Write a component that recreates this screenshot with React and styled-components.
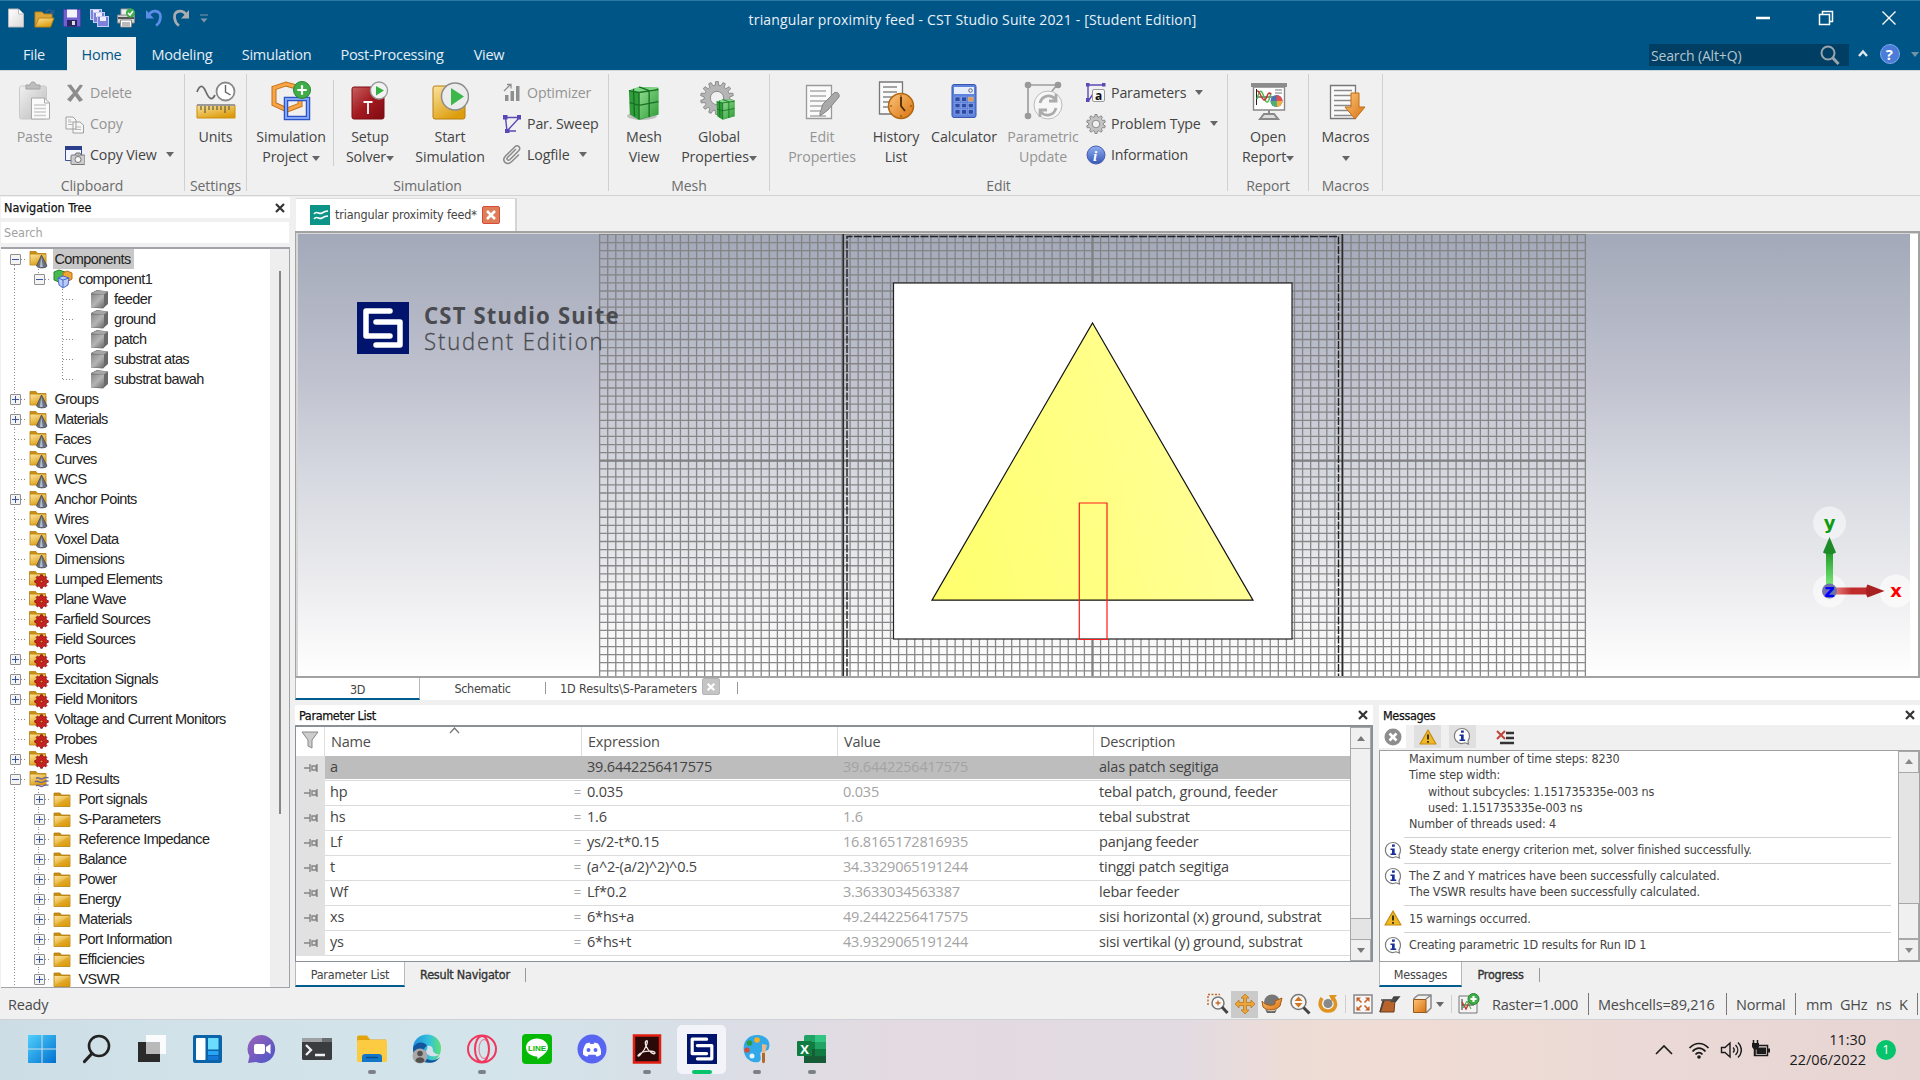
import React from 'react';
import styled, { createGlobalStyle, css } from 'styled-components';

const UI = `"Open Sans", "Noto Sans", sans-serif`;
const DLG = `"DejaVu Sans Condensed", "DejaVu Sans", sans-serif`;
const TREE = `"Liberation Sans", Arial, sans-serif`;

const Global = createGlobalStyle`
  * { box-sizing: border-box; }
  body { margin: 0; background: #f0f0f0; overflow: hidden; }
  svg { display: block; flex: none; }
`;

const Screen = styled.div`
  width: 1920px;
  height: 1080px;
  display: flex;
  flex-direction: column;
  overflow: hidden;
  background: #f0f0f0;
  font-family: ${UI};
  color: #444;
`;

/* ---------- icons ---------- */
const Svg = ({ w = 20, h, vb, children }) => (
  <svg width={w} height={h || w} viewBox={vb || `0 0 ${w} ${h || w}`} fill="none">{children}</svg>
);

const DefsSvg = styled.svg`
  position: absolute;
`;

const Defs = () => (
  <DefsSvg width="0" height="0">
    <defs>
      <linearGradient id="gold" x1="0" y1="0" x2="0.6" y2="1"><stop stopColor="#fbe3a0" /><stop offset="1" stopColor="#dd9d0c" /></linearGradient>
      <linearGradient id="grey" x1="0" y1="0" x2="1" y2="1"><stop stopColor="#f2f2f2" /><stop offset="1" stopColor="#8f8f8f" /></linearGradient>
      <linearGradient id="cube" x1="0" y1="0" x2="1" y2="1"><stop stopColor="#8a8a8a" /><stop offset=".5" stopColor="#b4b4b4" /><stop offset="1" stopColor="#6a6a6a" /></linearGradient>
      <linearGradient id="red" x1="0" y1="0" x2="1" y2="1"><stop stopColor="#c86060" /><stop offset=".5" stopColor="#a31a20" /><stop offset="1" stopColor="#7d0b10" /></linearGradient>
      <linearGradient id="blue" x1="0" y1="0" x2="0" y2="1"><stop stopColor="#8fb0f0" /><stop offset="1" stopColor="#3456b8" /></linearGradient>
      <linearGradient id="orange" x1="0" y1="0" x2="1" y2="1"><stop stopColor="#fbc47a" /><stop offset="1" stopColor="#d9720f" /></linearGradient>
      <linearGradient id="green" x1="0" y1="0" x2="1" y2="1"><stop stopColor="#8fdc8f" /><stop offset="1" stopColor="#2f9c36" /></linearGradient>
      <linearGradient id="paper" x1="0" y1="0" x2="1" y2="1"><stop stopColor="#ffffff" /><stop offset="1" stopColor="#dadada" /></linearGradient>
      <linearGradient id="win" x1="0" y1="0" x2="1" y2="1"><stop stopColor="#4fd0fb" /><stop offset="1" stopColor="#0070d0" /></linearGradient>
      <linearGradient id="chat" x1="0" y1="0" x2="1" y2="1"><stop stopColor="#9d62b8" /><stop offset="1" stopColor="#4a56c8" /></linearGradient>
      <linearGradient id="edge" x1="0" y1="0" x2="1" y2="0"><stop stopColor="#1f8fe0" /><stop offset=".6" stopColor="#35c4d8" /><stop offset="1" stopColor="#5fe070" /></linearGradient>
    </defs>
  </DefsSvg>
);

const Gear = ({ cx, cy, r, n = 10, fill, stroke, hole = '#f0f0f0', hr = 0.4 }) => {
  const pts = [];
  for (let i = 0; i < n; i++) {
    [[-0.3, 0.78], [-0.18, 1], [0.18, 1], [0.3, 0.78]].forEach(([o, k]) => {
      const a = ((i + o) / n) * Math.PI * 2 - Math.PI / 2;
      pts.push(`${(cx + Math.cos(a) * r * k).toFixed(2)},${(cy + Math.sin(a) * r * k).toFixed(2)}`);
    });
  }
  return (
    <g>
      <polygon points={pts.join(' ')} fill={fill} stroke={stroke} strokeWidth=".8" />
      <circle cx={cx} cy={cy} r={r * hr} fill={hole} stroke={stroke} strokeWidth=".8" />
    </g>
  );
};

const GreenCube = ({ x = 0, y = 0, s = 1 }) => (
  <g transform={`translate(${x} ${y}) scale(${s})`}>
    <path d="M1 5 L12 1 L33 2 L33 31 L12 37 L2 31 Z" fill="#2f9e3a" />
    <path d="M1 5 L12 1 L33 2 L24 7 L12 7 Z" fill="#7fd684" />
    <path d="M12 7 L33 4 L33 31 L12 36 Z" fill="url(#green)" />
    <path d="M12 7 L12 36 M1 5 L12 7 L33 4 M2 18 L12 21 L33 17 M23 5 L23 34 M6 3 L7 33 M12 1 L23 5" stroke="#186f24" strokeWidth="1.5" />
  </g>
);

const PlusBadge = ({ cx, cy, r }) => (
  <g>
    <circle cx={cx} cy={cy} r={r} fill="#3fae49" stroke="#2a8433" />
    <path d={`M${cx - r * 0.55} ${cy}h${r * 1.1}M${cx} ${cy - r * 0.55}v${r * 1.1}`} stroke="#fff" strokeWidth="2.2" />
  </g>
);

const Lines = ({ x, y, w, n, gap, c = '#8a8a8a' }) => (
  <path d={Array.from({ length: n }, (_, i) => `M${x} ${y + i * gap}h${w}`).join('')} stroke={c} strokeWidth="1.3" />
);

const I = {
  newDoc: <Svg w={20}><path d="M2.500 1h10l5 5v13h-15z" fill="url(#paper)" stroke="#b8b8b8" /><path d="M12.500 1v5h5" fill="#fff" stroke="#bbb" /></Svg>,
  open: <Svg w={22} h={20}><path d="M2 19V4h7l2 2h8v4" fill="#dba63a" stroke="#b98212" /><path d="M2 19l4-9h15l-3.500 9z" fill="url(#gold)" stroke="#b98212" /><path d="M13 4c3-3.500 6-2 7 1m1-3l-.8 3.300-3-.8" stroke="#2f6190" strokeWidth="1.300" /></Svg>,
  save: <Svg w={20}><path d="M1.500 1.500h17v17h-16l-1-1z" fill="#6f62d0" stroke="#4a3fa8" /><path d="M5 1.500h10v8h-10z" fill="#f3f3fb" /><path d="M5 12h10v6.500h-10z" fill="#2a2560" /><path d="M10 13h3v4h-3z" fill="#ddd" /></Svg>,
  saveAll: <Svg w={20}>{[[1, 1], [4, 4], [8, 8]].map(([x, y]) => <g key={x}><rect x={x + 0.5} y={y + 0.5} width="11" height="10" fill="#7d82d8" stroke="#c5cbf5" /><rect x={x + 3} y={y + 1} width="6" height="4" fill="#eef" /></g>)}</Svg>,
  print: <Svg w={20}><path d="M5 1h10v7h-10z" fill="#eee" stroke="#999" /><path d="M1.500 7h17v8h-17z" fill="#d5d5d5" stroke="#888" /><path d="M2 10h16" stroke="#555" strokeWidth="2" /><path d="M4.500 12h11v7h-11z" fill="#fff" stroke="#888" /><path d="M6 15h8M6 17h8" stroke="#777" /><circle cx="14.500" cy="5" r="4.600" fill="#3fae49" /><path d="M12 5l2 2 3-4" stroke="#fff" strokeWidth="1.500" /></Svg>,
  undo: <Svg w={20} vb="-2 0 20 20"><path d="M3 8C7 1 16 2 15.500 9c-.3 4-2 7-4.500 8.500" stroke="#5a8ce8" strokeWidth="2.800" /><path d="M1 2v8.500h8z" fill="#5a8ce8" /></Svg>,
  redo: <Svg w={20} vb="-2 0 20 20"><path d="M15 8C11 1 2 2 2.500 9c.3 4 2 7 4.500 8.500" stroke="#a9adb0" strokeWidth="2.800" /><path d="M17 2v8.500h-8z" fill="#a9adb0" /></Svg>,
  paste: <Svg w={34} h={40}><rect x="1.500" y="5" width="27" height="33" rx="2" fill="url(#grey)" opacity=".55" stroke="#aaa" /><path d="M8 8h14v-4h-4c0-4-6-4-6 0h-4z" fill="#bdbdbd" stroke="#a2a2a2" /><path d="M13.500 17h13l5 5v16h-18z" fill="#fbfbfb" stroke="#a8a8a8" /><path d="M26.500 17v5h5" stroke="#a8a8a8" /><Lines x={16} y={24} w={12} n={4} gap={3.5} c="#ccc" /></Svg>,
  del: <Svg w={20}><path d="M2 2l4-.5 4.500 6L15 1.500l3 1-5.500 7.500 5.500 7-3.500 2-4.500-6-4.500 6L2 16.500 8 10z" fill="#8d8d8d" /></Svg>,
  copy: <Svg w={20}><path d="M1 3h7l3 3v9H1zM8 8h7l3.500 3v8H8z" fill="#f7f7f7" stroke="#a0a0a0" /><path d="M3 8h5M3 10.500h5M3 6h3M10 13h6M10 15.500h6" stroke="#b5b5b5" /></Svg>,
  copyView: <Svg w={20}><path d="M.5 1.500h16v14H.5z" fill="#f4f7ff" stroke="#3e4f93" /><path d="M0 1h17v4H0z" fill="#2b3e8c" /><rect x="6" y="10" width="14" height="9.500" rx="1" fill="#ccc" stroke="#777" /><path d="M10 10l1-2h4l1 2" fill="#bbb" stroke="#777" /><circle cx="13" cy="14.500" r="3" fill="#f7f7f7" stroke="#777" /></Svg>,
  units: <Svg w={40}><path d="M1 11C4 3 7 4 10 11s6 9 9 3" stroke="#6d6d6d" strokeWidth="1.800" /><circle cx="29.500" cy="10.500" r="9" fill="#fff" stroke="#8a8a8a" strokeWidth="1.800" /><path d="M29.500 4v7l5 3" stroke="#666" strokeWidth="1.400" /><path d="M1 24h38v13H1z" fill="url(#gold)" stroke="#c98e10" /><path d="M1 24h38" stroke="#9a9a9a" strokeWidth="2" /><path d="M5 25v4M9 25v7M13 25v4M17 25v4M21 25v4M25 25v4M29 25v7M33 25v4" stroke="#553" strokeWidth="1.100" /></Svg>,
  simProject: <Svg w={40}><path d="M3 7l12-4 14 4v17l-13 5-13-6z" stroke="#c2701a" strokeWidth="5" /><path d="M3 7l12-4 14 4v17l-13 5-13-6z" stroke="#f8a546" strokeWidth="3" /><path d="M15 18h22v19h-22z" stroke="#2d54c5" strokeWidth="4.500" /><path d="M15 18h22v19h-22z" stroke="#83a7f8" strokeWidth="2" /><PlusBadge cx={31} cy={9} r={8.500} /></Svg>,
  setup: <Svg w={38} h={40}><rect x="1" y="6" width="32" height="32" rx="2" fill="url(#red)" stroke="#7c0d12" /><path d="M12.500 21h9M17 21v12" stroke="#fff" strokeWidth="1.800" /><circle cx="28" cy="9.500" r="8.500" fill="#f2f2f2" stroke="#999" strokeWidth="1.300" /><path d="M25 5l8 4.500-8 5z" fill="#35b043" /></Svg>,
  start: <Svg w={38} h={40} vb="-1 0 38 40"><rect x="1" y="5" width="32" height="33" rx="2" fill="url(#gold)" stroke="#b67f0c" /><circle cx="23" cy="15.500" r="13.500" fill="#ececec" stroke="#8c8c8c" strokeWidth="1.500" /><path d="M19 7l13 8.500-13 9z" fill="#3cb84a" /></Svg>,
  optimizer: <Svg w={20}><path d="M3 12h3.500v6H3zM8.500 8h3.500v10H8.500zM14 3h3.500v15H14z" fill="#8f8f8f" /><path d="M2 8l6-6M5 1.500h4v4" stroke="#8f8f8f" strokeWidth="1.300" /></Svg>,
  sweep: <Svg w={20}><path d="M3.500 3.500h14L5 17M3.500 3.500L5 17h9" stroke="#5948b5" strokeWidth="1.400" /><path d="M1 1h4.500v4.500H1zM15 1h4v4.500h-4zM3 15h4.500v4H3z" fill="#5948b5" /></Svg>,
  clip: <Svg w={20}><path d="M14 4l-8.500 8.500c-1.500 1.700.5 3.700 2.200 2.200l9-9c3-3.200-1.200-6.500-4-3.700L3.500 11c-4.500 5 1.500 10 6 5.800L17 9.500" stroke="#8a8a8a" strokeWidth="1.500" /></Svg>,
  mesh: <Svg w={40} vb="-2 0 40 40"><ellipse cx="16" cy="35" rx="15" ry="4" fill="#0003" /><GreenCube x={2} y={5} s={0.92} /></Svg>,
  globalProps: <Svg w={40}><Gear cx={18} cy={17} r={16.500} n={14} fill="#b5b5b5" stroke="#7c7c7c" /><GreenCube x={17} y={18} s={0.56} /></Svg>,
  editProps: <Svg w={40}><path d="M4.500 4.500h25v33h-25z" fill="#fafafa" stroke="#9a9a9a" strokeWidth="1.300" /><Lines x={8} y={10} w={16} n={6} gap={5} c="#aaa" /><path d="M18 32l3-9 11-11c3-2 6 1 5 4L26 29l-8 6z" fill="#a9a9a9" stroke="#858585" /></Svg>,
  history: <Svg w={40}><path d="M3.500 1h23v32h-23z" fill="#fafafa" stroke="#777" strokeWidth="1.300" /><Lines x={7} y={6} w={14} n={5} gap={5} c="#888" /><circle cx="25" cy="25" r="12.500" fill="url(#orange)" stroke="#b0650e" strokeWidth="1.500" /><path d="M25 16v9l4 5" stroke="#4a2a00" strokeWidth="1.800" /><path d="M25 14v2M36 25h-2M25 36v-2M14 25h2" stroke="#7a4300" /></Svg>,
  calc: <Svg w={30} h={40}><rect x="3" y="3.500" width="24" height="33" rx="2" fill="#5d83dc" stroke="#3757b0" /><path d="M5 6h20v7H5z" fill="#e5edfd" /><circle cx="21.500" cy="9.500" r="1.800" stroke="#667" />{[0, 1, 2].map(r => [0, 1, 2].map(c => <rect key={`${r}${c}`} x={6 + c * 6.6} y={16 + r * 6.3} width="5" height="4.500" fill={r === 0 && c === 2 ? '#e89a3c' : '#2d4aa5'} stroke="#a9c0f4" strokeWidth=".5" />))}</Svg>,
  paramUpdate: <Svg w={40}><path d="M5 4h30M5 4v32M16 26L34 4" stroke="#9c9c9c" strokeWidth="1.600" /><circle cx="5" cy="4" r="3.300" fill="#999" /><circle cx="35" cy="4" r="3.300" fill="#999" /><circle cx="5" cy="35" r="3.300" fill="#999" /><circle cx="25" cy="24" r="14" fill="#f7f7f7" stroke="#bbb" /><path d="M17 22c2-8 11-9 15-4m1-5v7h-7M33 27c-2 8-11 9-15 4m-1 5v-7h7" stroke="#ababab" strokeWidth="2.800" /></Svg>,
  params: <Svg w={20}><path d="M2 2h16M2 2v16M3 17l6-9" stroke="#5a49b8" strokeWidth="1.400" /><path d="M0 0h3.500v3.500H0zM16 0h3.500v3.500H16zM0 15h3.500v4H0z" fill="#5a49b8" /><rect x="6.500" y="6.500" width="12" height="12" rx="1.500" fill="#f7f7f7" stroke="#999" /><text x="9" y="16.500" fontSize="12" fontWeight="700" fontFamily="Open Sans" fill="#111">a</text></Svg>,
  problem: <Svg w={20}><Gear cx={10} cy={10} r={9.500} n={10} fill="#c4c4c4" stroke="#777" /></Svg>,
  info: <Svg w={20}><circle cx="10" cy="10" r="9" fill="url(#blue)" stroke="#4a5cae" /><text x="7" y="15.500" fontSize="15" fontStyle="italic" fontWeight="700" fontFamily="Liberation Serif" fill="#fff">i</text></Svg>,
  report: <Svg w={40} vb="-1 0 40 40"><path d="M2 2h36v4H2z" fill="#8c8c8c" /><path d="M4.500 6h31v23h-31z" fill="#fff" stroke="#888" strokeWidth="1.400" /><path d="M7.500 8v16M7 16h17" stroke="#222" /><path d="M8 18c3-12 5-8 7-2s4 9 7-4" stroke="#4cb84c" strokeWidth="1.500" /><path d="M8 10c3-1 4 8 7 9s3-10 7-6" stroke="#c33" strokeWidth="1.500" /><path d="M26 9h7M26 12h7" stroke="#777" /><circle cx="27.500" cy="20" r="6" fill="#4c6fb5" /><path d="M27.500 20v-6a6 6 0 016 6z" fill="#e05050" /><path d="M27.500 20h6a6 6 0 01-6 6z" fill="#f0b040" /><path d="M21.500 20a6 6 0 006 6v-6z" fill="#4cb070" /><path d="M20 29v4M11 38l4-5h10l4 5z" stroke="#888" strokeWidth="2" fill="#ddd" /></Svg>,
  macros: <Svg w={40}><path d="M4.500 4.500h25v33h-25z" fill="#fafafa" stroke="#777" strokeWidth="1.300" /><Lines x={8} y={9.500} w={18} n={6} gap={5} /><path d="M25 12h8v14h6L29 38 19 26h6z" fill="url(#orange)" stroke="#c06c10" /></Svg>,
  search: <Svg w={22}><circle cx="9" cy="9" r="6.500" stroke="#99a5ae" strokeWidth="2" /><path d="M13.500 13.500l6 6.500" stroke="#99a5ae" strokeWidth="3" /></Svg>,
  help: <Svg w={20}><circle cx="10" cy="10" r="9.500" fill="#4a7cd8" stroke="#7fa6ee" /><text x="5.800" y="15.500" fontSize="15" fontWeight="700" fontFamily="Open Sans" fill="#fff">?</text></Svg>,
};

const FolderShape = ({ x = 1 }) => (
  <g>
    <path d={`M${x} 2.500h6l1.500 2h8.500v11.500H${x}z`} fill="#c68e14" stroke="#b57e10" strokeWidth=".8" />
    <path d={`M${x + 0.4} 5.500h15.300v10.200H${x + 0.4}z`} fill="url(#gold)" />
  </g>
);
const treeIcons = {
  cone: <Svg w={20}><FolderShape /><path d="M12.500 6l5.500 11c-1 2.500-9 2.500-10.500 0z" fill="#6b7280" stroke="#40454f" strokeWidth=".8" /><path d="M12.300 8l1.500 10h-3z" fill="#b4bccb" /></Svg>,
  gear: <Svg w={20}><FolderShape x={0.5} /><Gear cx={12.500} cy={12.500} r={6.800} n={8} fill="#c62222" stroke="#8c1010" hole="#e6a030" hr={0.2} /></Svg>,
  wave: <Svg w={20}><FolderShape /><path d="M7 9.500c3-2.500 4 2 7 0s3-.5 5.500-1M6 13c3-2.500 5 2 8 0s3-.5 5.500-1M7 17c3-2.500 4 2 7 0s3-.5 5.500-1" stroke="#6e6898" strokeWidth="1.400" /></Svg>,
  folder: <Svg w={19}><g transform="translate(0 .5)"><FolderShape x={1} /><path d="M2 15L16 6v9z" fill="#d99b10" opacity=".5" /></g></Svg>,
  solid: <Svg w={20}><path d="M2 4l6-3 11 1.500V15l-5 4.500-12-1z" fill="#6a6a6a" /><path d="M2 5.500h13V19L2 18z" fill="url(#cube)" /><path d="M2 4.500l6-3 10.500 1-3.500 3z" fill="#a5a5a5" /></Svg>,
  comp: <Svg w={20}><path d="M1 3l5-2 6 2v8l-6 2-5-2z" fill="#48b850" stroke="#238a2c" /><path d="M10 4l4-2 5 2v6l-5 3-4-2z" fill="#f0a535" stroke="#b8700e" /><path d="M5 9l5-2 6 2-1 7-5 3-4-3z" fill="#b9ccf8" stroke="#4767cc" /><path d="M5 9l5 2 6-2M10 11v7" stroke="#4767cc" /></Svg>,
};

/* ---------- title bar and tabs ---------- */
const TitleBar = styled.header`
  height: 37px;
  flex: none;
  display: grid;
  grid-template-columns: 700px 1fr 700px;
  background: #005587;
  border-top: 1px solid #2b7aa6;
  color: #e9f1f6;
`;
const QuickAccess = styled.div`
  display: flex;
  align-items: center;
  gap: 7px;
  padding-left: 6px;
  height: 34px;
`;
const AppTitle = styled.div`
  text-align: center;
  font-size: 14px;
  line-height: 37px;
  letter-spacing: 0.16px;
  padding-left: 25px;
  white-space: nowrap;
`;
const WindowButtons = styled.div`
  display: flex;
  justify-content: flex-end;
  gap: 47px;
  padding: 9px 23px 0 0;
`;
const TabBar = styled.nav`
  height: 34px;
  flex: none;
  display: flex;
  background: #005587;
  border-bottom: 1px solid #cfd6da;
  padding-left: 1px;
`;
const RibbonTab = styled.div`
  width: ${p => p.$w}px;
  height: 34px;
  text-align: center;
  font-size: 14.500px;
  line-height: 35px;
  letter-spacing: -0.25px;
  color: ${p => (p.$on ? '#005587' : '#e4eef5')};
  background: ${p => (p.$on ? '#f0f0f0' : 'transparent')};
`;
const SearchBox = styled.div`
  margin: 7px 0 0 auto;
  width: 200px;
  height: 22px;
  display: flex;
  justify-content: space-between;
  align-items: center;
  padding: 0 8px 0 2px;
  background: #003f63;
  color: #b4c5d0;
  font-size: 14px;
  letter-spacing: -0.15px;
`;
const HelpArea = styled.div`
  width: 71px;
  display: flex;
  align-items: center;
  gap: 11px;
  padding-left: 8px;
  height: 34px;
`;
const Caret = styled.i`
  display: inline-block;
  border: 4px solid transparent;
  border-top: 5px solid ${p => p.$c || '#666'};
  border-bottom: 0;
  margin-left: ${p => p.$ml || 0}px;
  vertical-align: middle;
`;

/* ---------- ribbon ---------- */
const Ribbon = styled.section`
  height: 125px;
  flex: none;
  display: flex;
  border-bottom: 1px solid #d2d2d2;
  background: #f0f0f0;
  padding-top: 3px;
`;
const Group = styled.div`
  width: ${p => p.$w}px;
  height: 117px;
  display: flex;
  flex-direction: column;
  border-right: 1px solid #d0d0d0;
`;
const GroupBody = styled.div`
  height: 102px;
  flex: none;
  display: flex;
  padding-left: ${p => p.$pl || 0}px;
`;
const GroupLabel = styled.div`
  flex: none;
  text-align: center;
  font-size: 14px;
  line-height: 20px;
  height: 20px;
  color: #6b6b6b;
  letter-spacing: -0.1px;
`;
const Big = styled.div`
  width: ${p => p.$w}px;
  display: flex;
  flex-direction: column;
  align-items: center;
  padding-top: 7px;
  font-size: 14.200px;
  line-height: 20px;
  letter-spacing: -0.1px;
  text-align: center;
  white-space: nowrap;
  color: ${p => (p.$off ? '#949494' : '#444')};
  & > svg { margin-bottom: 6px; }
`;
const SmallCol = styled.div`
  width: ${p => p.$w}px;
  display: flex;
  flex-direction: column;
  padding-top: 3px;
  margin-left: ${p => p.$ml || 0}px;
`;
const Small = styled.div`
  display: flex;
  align-items: center;
  height: 31px;
  gap: ${p => p.$gap || 5}px;
  font-size: 14.200px;
  letter-spacing: -0.15px;
  line-height: 18px;
  white-space: nowrap;
  color: ${p => (p.$off ? '#949494' : '#444')};
`;
const Divider = styled.div`
  width: 1px;
  height: ${p => p.$h}px;
  margin: ${p => p.$m || '0'};
  background: ${p => p.$c || '#cfcfcf'};
  flex: none;
`;

const BigButton = ({ icon, a, b, w, off, arrow }) => (
  <Big $w={w} $off={off}>
    {I[icon]}
    <span>{a}</span>
    <span>{b}{arrow && <Caret $ml={b && arrow > 1 ? 4 : 0} />}</span>
  </Big>
);
const SmallButton = ({ icon, text, off, arrow, gap }) => (
  <Small $off={off} $gap={gap}>{I[icon]}<span>{text}</span>{arrow && <Caret $ml={4} />}</Small>
);

/* ---------- workspace ---------- */
const Work = styled.main`
  height: 791px;
  flex: none;
  display: grid;
  grid-template-columns: 290px 1fr;
  column-gap: 5px;
`;
const NavPanel = styled.aside`
  display: flex;
  flex-direction: column;
  padding: 1px 0 0 1px;
`;
const PanelTitle = styled.div`
  height: ${p => p.$h || 20}px;
  flex: none;
  display: flex;
  align-items: center;
  justify-content: space-between;
  background: #fff;
  padding: 0 4px 0 ${p => p.$pl || 4}px;
  font-family: ${DLG};
  font-size: 12.500px;
  letter-spacing: ${p => p.$ls || 0}px;
  color: #111;
  -webkit-text-stroke: 0.25px #111;
`;
const NavSearch = styled.div`
  height: 21px;
  flex: none;
  margin: 4px 1px 4px 0;
  padding-left: 3px;
  background: #fff;
  font-family: ${DLG};
  font-size: 12.500px;
  line-height: 21px;
  color: #a2a2a2;
`;
const TreeBox = styled.div`
  height: 741px;
  border: solid #a0a3a8;
  border-width: 2px 1px 1px 0;
  background: #fff;
  display: flex;
  overflow: hidden;
`;
const TreeList = styled.div`
  flex: 1;
  overflow: hidden;
  font-family: ${TREE};
  font-size: 14.500px;
  letter-spacing: -0.62px;
  color: #222;
`;
const TreeRow = styled.div`
  height: 20px;
  display: flex;
  align-items: center;
  padding-left: 2px;
  white-space: nowrap;
`;
const dots = c => `repeating-linear-gradient(${c}, #8c8c8c 0 1px, transparent 1px 3px)`;
const Guide = styled.span`
  width: 24px;
  height: 20px;
  flex: none;
  display: flex;
  align-items: center;
  justify-content: center;
  background-repeat: no-repeat;
  ${p => {
    const layers = [];
    if (p.$v) layers.push(`${dots('to bottom')} 11px ${p.$v === 'start' ? '10px' : '0'} / 1px ${p.$v === 'mid' ? '20px' : '10px'} no-repeat`);
    if (p.$h) layers.push(`${dots('to right')} 12px 10px / 12px 1px no-repeat`);
    return layers.length ? css`background: ${layers.join(', ')};` : '';
  }}
`;
const Toggle = styled.span`
  width: 11px;
  height: 11px;
  border: 1px solid #8f8f8f;
  border-radius: 1px;
  background:
    linear-gradient(#3b54a0, #3b54a0) center / 7px 1px no-repeat,
    linear-gradient(#3b54a0, #3b54a0) center / ${p => (p.$open ? '0 0' : '1px 7px')} no-repeat,
    #f4f4f4;
`;
const TreeIcon = styled.span`
  width: ${p => p.$w || 26}px;
  flex: none;
  padding-left: ${p => p.$pl || 1}px;
`;
const TreeText = styled.span`
  line-height: 20px;
  height: 20px;
  padding: 0 3px 0 2px;
  margin-left: -2px;
  background: ${p => (p.$sel ? '#c8c8c8' : 'transparent')};
`;
const TreeScroll = styled.div`
  width: 19px;
  background: #eeeeee;
  display: flex;
  justify-content: center;
  padding-top: 22px;
`;
const TreeThumb = styled.div`
  width: 2px;
  height: 543px;
  background: #868686;
`;

const tree = [
  ['cone', 'Components', 0, '-', true], ['comp', 'component1', 1, '-'],
  ['solid', 'feeder', 2], ['solid', 'ground', 2], ['solid', 'patch', 2], ['solid', 'substrat atas', 2], ['solid', 'substrat bawah', 2],
  ['cone', 'Groups', 0, '+'], ['cone', 'Materials', 0, '+'], ['cone', 'Faces', 0], ['cone', 'Curves', 0], ['cone', 'WCS', 0],
  ['cone', 'Anchor Points', 0, '+'], ['cone', 'Wires', 0], ['cone', 'Voxel Data', 0], ['cone', 'Dimensions', 0],
  ['gear', 'Lumped Elements', 0], ['gear', 'Plane Wave', 0], ['gear', 'Farfield Sources', 0], ['gear', 'Field Sources', 0],
  ['gear', 'Ports', 0, '+'], ['gear', 'Excitation Signals', 0, '+'], ['gear', 'Field Monitors', 0, '+'],
  ['gear', 'Voltage and Current Monitors', 0], ['gear', 'Probes', 0], ['gear', 'Mesh', 0, '+'], ['wave', '1D Results', 0, '-'],
  ...['Port signals', 'S-Parameters', 'Reference Impedance', 'Balance', 'Power', 'Energy', 'Materials', 'Port Information', 'Efficiencies', 'VSWR'].map(t => ['folder', t, 1, '+']),
];

const TreeItem = ({ item: [icon, text, level, tog, sel], last, first, onlyChild }) => (
  <TreeRow>
    {level > 0 && <Guide $v="mid" />}
    {level > 1 && <Guide />}
    <Guide $h $v={first ? 'start' : last || onlyChild ? 'end' : 'mid'}>{tog && <Toggle $open={tog === '-'} />}</Guide>
    <TreeIcon $w={level === 2 ? 39 : 27.5} $pl={level === 2 ? 14 : 2}>{treeIcons[icon]}</TreeIcon>
    <TreeText $sel={sel}>{text}</TreeText>
  </TreeRow>
);

const RightSide = styled.div`
  display: flex;
  flex-direction: column;
  min-width: 0;
`;
const DocTab = styled.div`
  height: 33px;
  width: 221px;
  margin: 2px 0 0 1px;
  flex: none;
  display: flex;
  align-items: center;
  padding: 0 0 1px 14px;
  background: #fff;
  border-right: 2px solid #d4d4d4;
  border-top: 1px solid #dcdcdc;
  font-family: ${DLG};
  font-size: 12.500px;
  letter-spacing: -0.15px;
  gap: 5px;
  white-space: nowrap;
`;
const TabClose = styled.span`
  width: 18px;
  height: ${p => p.$h || 18}px;
  flex: none;
  display: grid;
  place-items: center;
  border-radius: 2px;
  border: 1px solid ${p => (p.$grey ? '#b5b5b5' : '#dc4838')};
  background: ${p => (p.$grey ? '#c4c4c4' : '#dc7f58')};
`;
const Viewport = styled.div`
  height: 447px;
  flex: none;
  border: solid #a2a2a2;
  border-width: 2px 2px 2px 1px;
  padding: 1px 7px 0 2px;
  background: #fff;
  box-shadow: inset 2px 1px 0 #d6d6d6;
`;
const ViewTabs = styled.div`
  height: 22px;
  flex: none;
  display: flex;
  background: #fff;
  font-family: ${DLG};
  font-size: 12.500px;
  line-height: 21px;
  letter-spacing: -0.3px;
`;
const ActiveTab = styled.div`
  width: ${p => p.$w}px;
  height: ${p => p.$h}px;
  line-height: ${p => p.$h + 1}px;
  text-align: center;
  background: #fff;
  border: 1px solid #b9b9b9;
  border-top: 0;
  border-bottom: 2px solid #005b8e;
  color: #444;
`;
const Plain = styled.div`
  width: ${p => p.$w}px;
  padding-left: ${p => p.$pl || 0}px;
  text-align: center;
  white-space: nowrap;
  letter-spacing: ${p => p.$ls || 'inherit'};
  ${p => p.$strong && css`-webkit-text-stroke: 0.35px #333; color: #333;`}
`;

const Docks = styled.div`
  margin-top: 5px;
  height: 283px;
  display: grid;
  grid-template-columns: 1078px 541px;
  column-gap: 6px;
`;
const Dock = styled.section`
  display: flex;
  flex-direction: column;
  min-width: 0;
`;
const TableFrame = styled.div`
  height: 237px;
  flex: none;
  border: 1px solid #8b8f96;
  border-width: 2px 2px 1px 1px;
  display: flex;
  background: #fff;
  overflow: hidden;
`;
const Table = styled.div`
  flex: 1;
  font-size: 14.500px;
  letter-spacing: -0.2px;
`;
const cols = '29px 257px 256px 256px 1fr';
const HeadRow = styled.div`
  height: 29px;
  display: grid;
  grid-template-columns: ${cols};
  color: #4c4c4c;
`;
const HeadCell = styled.div`
  border-right: 1px solid #dedede;
  padding-left: 6px;
  height: 29px;
  line-height: 30px;
  display: flex;
  &:first-child { padding-left: 5px; }
  &:last-child { border-right: 0; }
`;
const Row = styled.div`
  height: 25px;
  display: grid;
  grid-template-columns: ${cols};
  background: ${p => (p.$sel ? '#bdbdbd' : '#fff')};
  border-bottom: 1px solid #dcdcdc;
  box-shadow: ${p => (p.$sel ? 'inset 0 -1px 0 #fff' : 'none')};
`;
const Cell = styled.div`
  padding-left: ${p => p.$pl || 5}px;
  line-height: 22px;
  white-space: nowrap;
  color: ${p => (p.$dim ? '#a3a3a3' : '#444')};
  display: flex;
  justify-content: space-between;
`;
const Gutter = styled.div`
  background: #e1e1e1;
  height: 25px;
  display: grid;
  place-items: center;
  padding: 0 0 2px 2px;
`;
const Eq = styled.span`
  color: #aaa;
  font-size: 13px;
  padding-right: 1px;
`;
const ScrollBar = styled.div`
  width: 21px;
  flex: none;
  background: #e4e4e4;
  border-left: 1px solid #a8a8a8;
  display: flex;
  flex-direction: column;
`;
const ScrollBtn = styled.div`
  height: 22px;
  display: grid;
  place-items: center;
  background: #f0f0f0;
  border: 1px solid #a8a8a8;
  border-left: 0;
  margin-top: ${p => (p.$end ? 'auto' : 0)};
  & > i { transform: ${p => (p.$end ? 'none' : 'rotate(180deg)')}; }
`;
const ScrollThumb = styled.div`
  height: ${p => p.$h}px;
  margin-top: ${p => p.$mt || 0}px;
  background: #f0f0f0;
  border-bottom: 1px solid #a8a8a8;
  border-top: ${p => (p.$mt ? '1px solid #a8a8a8' : 0)};
  border-right: 1px solid #a8a8a8;
`;
const DockTabs = styled.div`
  display: flex;
  font-family: ${DLG};
  font-size: 12.500px;
  line-height: 26px;
  letter-spacing: -0.22px;
`;

const params = [
  ['a', '39.6442256417575', '39.6442256417575', 'alas patch segitiga'],
  ['hp', '0.035', '0.035', 'tebal patch, ground, feeder'],
  ['hs', '1.6', '1.6', 'tebal substrat'],
  ['Lf', 'ys/2-t*0.15', '16.8165172816935', 'panjang feeder'],
  ['t', '(a^2-(a/2)^2)^0.5', '34.3329065191244', 'tinggi patch segitiga'],
  ['Wf', 'Lf*0.2', '3.3633034563387', 'lebar feeder'],
  ['xs', '6*hs+a', '49.2442256417575', 'sisi horizontal (x) ground, substrat'],
  ['ys', '6*hs+t', '43.9329065191244', 'sisi vertikal (y) ground, substrat'],
];

const MsgTools = styled.div`
  height: 25px;
  flex: none;
  display: flex;
  gap: 8px;
`;
const MsgTool = styled.div`
  width: 27px;
  height: 23px;
  margin-left: ${p => p.$ml || 0}px;
  display: grid;
  place-items: center;
  background: ${p => p.$bg || 'transparent'};
`;
const MsgFrame = styled.div`
  height: 212px;
  flex: none;
  border: 1px solid #a0a0a0;
  display: flex;
  background: #fff;
  overflow: hidden;
`;
const MsgList = styled.div`
  flex: 1;
  font-family: ${DLG};
  font-size: 12.500px;
  line-height: 16.300px;
  letter-spacing: -0.16px;
  color: #444;
  white-space: pre;
`;
const Msg = styled.div`
  display: grid;
  grid-template-columns: 24px 487px;
  height: ${p => p.$h}px;
  & > svg { margin: ${p => p.$it || 3}px 0 0 4px; }
`;
const MsgBody = styled.div`
  padding: ${p => p.$pt}px 0 0 5px;
  border-bottom: ${p => (p.$last ? 0 : '1px solid #d2d2d2')};
`;
const Indent = styled.div`
  padding-left: 19px;
`;

const InfoBubble = () => (
  <Svg w={19}><path d="M9 1.500a7.500 7.500 0 017.500 7.500c0 2-.5 3.500-1.500 4.800l.5 3.200-3.500-1.200A7.500 7.500 0 119 1.500z" fill="#fff" stroke="#7d7d7d" strokeWidth="1.200" /><path d="M8 3.500h2.800v2.300H8zM6.500 7.500h4.200v5h1.500v1.500H6.500v-1.500H8V9H6.500z" fill="#1b2f9c" /></Svg>
);
const WarnIcon = () => (
  <Svg w={18}><path d="M9 2l8 14H1z" fill="#f0b823" stroke="#c58a10" strokeWidth="1.200" strokeLinejoin="round" /><path d="M9 6.500v5M9 13v1.800" stroke="#3a3320" strokeWidth="2" /></Svg>
);
const CloseX = ({ s = 12, c = '#333', w = 2.2 }) => (
  <Svg w={s} vb="0 0 12 12"><path d="M2 2l8 8M10 2l-8 8" stroke={c} strokeWidth={w} /></Svg>
);
const CstLogo = ({ w, h }) => (
  <Svg w={w} h={h} vb="0 0 52 52"><path d="M0 0h52v52H0z" fill="#00146e" /><path d="M34 9H9v25h25M18 20h25v23H18" stroke="#fff" strokeWidth="5.500" strokeLinecap="round" strokeLinejoin="round" /></Svg>
);

/* ---------- 3D scene ---------- */
const Scene = () => {
  const ox = 298, oy = 234, W = 1612, H = 442;
  const cx = 1092.5 - ox, cy = 460.7 - oy, s = 8.08;
  const v = [], h = [];
  for (let i = -61; i <= 61; i++) v.push(cx + i * s);
  for (let j = -28; j <= 26; j++) { const y = cy + j * s; if (y > 0 && y < H) h.push(y); }
  return (
    <svg width={W} height={H} viewBox={`0 0 ${W} ${H}`} fill="none">
      <defs>
        <linearGradient id="sky" x1="0" y1="0" x2="0" y2="1">
          <stop stopColor="#a3a9b9" /><stop offset=".32" stopColor="#bfc1ce" /><stop offset=".55" stopColor="#d6d9e0" /><stop offset=".78" stopColor="#ebebee" /><stop offset="1" stopColor="#fff" />
        </linearGradient>
        <linearGradient id="patch" x1="0" y1="1" x2="1" y2=".8"><stop stopColor="#ffff6c" /><stop offset="1" stopColor="#ffff98" /></linearGradient>
        <linearGradient id="gy" x1="0" x2="0" y1="0" y2="1"><stop stopColor="#1e9a28" /><stop offset="1" stopColor="#7be87b" /></linearGradient>
        <linearGradient id="rx"><stop stopColor="#e88080" /><stop offset=".5" stopColor="#c02c2c" /></linearGradient>
      </defs>
      <rect width={W} height={H} fill="url(#sky)" />
      <path d={v.map(x => `M${x.toFixed(2)} 0V${H}`).join('') + h.map(y => `M${cx - 61 * s} ${y.toFixed(2)}H${cx + 61 * s}`).join('')} stroke="#828282" strokeWidth="1.300" opacity=".94" />
      <path d={`M${cx} 0V${H}M${cx - 61 * s} ${cy}H${cx + 61 * s}`} stroke="#808080" strokeWidth="2.200" />
      <g transform="translate(126 0) scale(.92 1)">
        <text x="0" y="90.500" fontFamily="Noto Sans" fontWeight="700" fontSize="24" fill="#4a4b50" textLength="211.500" lengthAdjust="spacing">CST Studio Suite</text>
        <text x="0" y="116" fontFamily="Open Sans" fontWeight="300" fontSize="24" fill="#4a4b50" stroke="#4a4b50" strokeWidth=".3" textLength="194" lengthAdjust="spacing">Student Edition</text>
      </g>
      <path d={`M545.300 0V${H}M1044.300 0V${H}`} stroke="#2a2a2a" strokeWidth="1.600" />
      <path d={`M549 ${H}V2.500H1040.500V${H}`} stroke="#222" strokeWidth="1.400" strokeDasharray="8 1.500" />
      <rect x="595.500" y="49" width="398.500" height="356" fill="#fff" stroke="#222" strokeWidth="1.200" />
      <path d="M794.500 89L955 366.200H634z" fill="url(#patch)" stroke="#111" strokeWidth="1.200" />
      <path d="M781.300 269H809V405.500H781.300z" stroke="#ff1a1a" strokeWidth="1.200" />
      <g transform="translate(1531.500 0)">
        <circle cx="0" cy="289" r="16.500" fill="#fff" opacity=".5" />
        <circle cx="0" cy="357" r="16.500" fill="#fff" opacity=".5" />
        <circle cx="66.500" cy="357" r="16.500" fill="#fff" opacity=".6" />
        <path d="M-3.500 318h7v34h-7z" fill="url(#gy)" />
        <path d="M0 303l6.500 15.500c-3 2-10 2-13 0z" fill="#1d8a28" />
        <path d="M5 353.500h34v7H5z" fill="url(#rx)" />
        <path d="M55 357l-17-6.500c-2 3-2 10 0 13z" fill="#a82020" />
        <circle r="7.500" cy="357" fill="#7074a8" />
        <text x="0" y="295" fontFamily="DejaVu Sans" fontWeight="700" fontSize="18" fill="#0f9a0f" textAnchor="middle">y</text>
        <text x="0" y="362.500" fontFamily="DejaVu Sans" fontWeight="700" fontSize="18" fill="#0000ff" textAnchor="middle">z</text>
        <text x="66.500" y="362.500" fontFamily="DejaVu Sans" fontWeight="700" fontSize="18" fill="#ff0000" textAnchor="middle">x</text>
      </g>
      <svg x="59" y="68" width="52" height="52" viewBox="0 0 52 52"><path d="M0 0h52v52H0z" fill="#00146e" /><path d="M33 9H9v25h24M19 20h24v23H19" stroke="#fff" strokeWidth="5.500" strokeLinecap="round" strokeLinejoin="round" /></svg>
    </svg>
  );
};

/* ---------- status bar ---------- */
const StatusBar = styled.footer`
  height: 33px;
  flex: none;
  display: flex;
  align-items: center;
  padding-top: 2px;
  border-bottom: 1px solid #cdd0d4;
  font-size: 14.500px;
  color: #4a4a4a;
  letter-spacing: -0.2px;
  white-space: nowrap;
`;
const Ready = styled.div`
  width: 1204px;
  padding-left: 8px;
`;
const StatusIcon = styled.div`
  width: ${p => p.$w || 28}px;
  height: 27px;
  display: flex;
  align-items: center;
  justify-content: center;
  background: ${p => (p.$on ? '#cacaca' : 'transparent')};
`;
const StatusText = styled.div`
  width: ${p => p.$w}px;
  padding-left: ${p => p.$pl || 10}px;
`;
const S = {
  zoomBox: <Svg w={22}><path d="M1 12V1.500h12" stroke="#c8672a" strokeWidth="1.500" strokeDasharray="2 1.500" /><circle cx="11" cy="10" r="6" fill="#f7f7f7" stroke="#777" strokeWidth="1.500" /><path d="M8.500 10h5M11 7.500v5" stroke="#c8672a" strokeWidth="1.300" /><path d="M15 14l5.500 6" stroke="#444" strokeWidth="3" /></Svg>,
  pan: <Svg w={22}><path d="M11 1l4 4h-2.500v4.500H17V7l4 4-4 4v-2.500h-4.500V17H15l-4 4-4-4h2.500v-4.500H5V15l-4-4 4-4v2.500h4.500V5H7z" fill="#eda53a" stroke="#bd7719" strokeWidth=".8" /></Svg>,
  orbit: <Svg w={22}><ellipse cx="11" cy="9" rx="8" ry="7.500" fill="#777" /><path d="M1 8c4 5 10 5 13 3V8l7-3-2 8c-3 4-12 6-17 1z" fill="url(#orange)" stroke="#a85c10" /><path d="M4 16c4 3 9 3 12 0l-2 4H6z" fill="#666" /></Svg>,
  zoomDyn: <Svg w={22}><circle cx="9.500" cy="9" r="7.500" fill="#f7f7f7" stroke="#777" strokeWidth="1.500" /><path d="M9.500 3.500l4 4.500h-8zM9.500 14.500l4-4.500h-8z" fill="#d07422" /><path d="M14.500 14.500l6 6" stroke="#444" strokeWidth="3" /></Svg>,
  rotate: <Svg w={22}><path d="M5 5c-4 6-1 13 6 13s10-7 5-13" stroke="#e09420" strokeWidth="3.600" /><path d="M12 2h8l-5 6.500z" fill="#e09420" /><circle cx="11" cy="10.500" r="4.500" fill="#888" /></Svg>,
  fit: <Svg w={20}><path d="M1 1h18v18H1z" fill="#f7f7f7" stroke="#888" strokeWidth="1.500" /><path d="M3.500 3.500h4.500L3.500 8zM16.500 3.500H12l4.500 4.500zM16.500 16.500H12l4.500-4.500zM3.500 16.500H8L3.500 12z" fill="#c8602a" /><path d="M4 4l4.500 4.500M16 4l-4.500 4.500M16 16l-4.500-4.500M4 16l4.500-4.500" stroke="#c8602a" strokeWidth="1.500" /></Svg>,
  work: <Svg w={22} vb="1 0 22 22"><path d="M5 7h12l-1 12H2z" fill="#b8622c" stroke="#6c3e1c" /><path d="M2 19L6 7M13 9l3-5h5l-4 5" fill="#444" stroke="#444" strokeWidth="1.500" /><path d="M3 7h13" stroke="#555" strokeWidth="1.500" /></Svg>,
  view: <Svg w={22}><path d="M6 2h13v13l-5 5M6 2L1.500 6M19 2l-5 4" stroke="#888" strokeWidth="1.500" /><path d="M1.500 6.500h12.500v13H1.500z" fill="url(#orange)" stroke="#96571a" /></Svg>,
  plot: <Svg w={22}><path d="M1 3h18v17H1z" fill="#f3f3f3" stroke="#777" /><path d="M4 6v11M4 12h12" stroke="#333" /><path d="M4 9l4 7 4-8" stroke="#c33" strokeWidth="1.500" /><path d="M5 15l4-7 4 8" stroke="#3a3" strokeWidth="1" /><PlusBadge cx={15.500} cy={6} r={5.500} /></Svg>,
};

/* ---------- taskbar ---------- */
const TaskBar = styled.footer`
  height: 60px;
  flex: none;
  display: flex;
  justify-content: space-between;
  padding: 5px 24px 0 14px;
  color: #1b1b1b;
  background: linear-gradient(90deg, #cddde6 0, #d1e3e9 200px, #d3e4ea 500px, #d8dfe7 680px, #e4dae1 900px, #e2dbe2 1180px, #eddcd6 1290px, #f0dcd4 1400px, #ead9d6 1650px, #e7d5d4 100%);
`;
const Apps = styled.div`
  display: flex;
`;
const App1 = styled.div`
  width: 49px;
  height: 49px;
  margin: 0 3px;
  padding-top: 9px;
  display: flex;
  flex-direction: column;
  align-items: center;
  justify-content: space-between;
  border-radius: 5px;
  background: ${p => (p.$on ? 'rgba(247,248,252,.85)' : 'transparent')};
`;
const Dot = styled.div`
  width: ${p => (p.$on ? 20 : 8)}px;
  height: 4px;
  border-radius: 2px;
  background: ${p => (p.$on ? '#06c46c' : '#7b8187')};
`;
const Tray = styled.div`
  display: flex;
  align-items: center;
  height: 50px;
  gap: 10px;
`;
const Clock = styled.div`
  width: 84px;
  text-align: right;
  font-size: 14.500px;
  line-height: 20px;
  letter-spacing: -0.05px;
`;
const Badge = styled.div`
  width: 20px;
  height: 20px;
  border-radius: 50%;
  background: #06c46c;
  color: #fff;
  font-size: 13px;
  line-height: 19px;
  text-align: center;
`;
const T = {
  win: <Svg w={30}><path d="M1 1h13.500v13.500H1zM15.500 1H29v13.500H15.500zM1 15.500h13.500V29H1zM15.500 15.500H29V29H15.500z" fill="url(#win)" /></Svg>,
  find: <Svg w={30}><circle cx="17" cy="12" r="10" stroke="#222" strokeWidth="2.600" /><path d="M10 19.500L2.500 27.500" stroke="#222" strokeWidth="3.200" strokeLinecap="round" /></Svg>,
  task: <Svg w={30}><path d="M1 8h22v20H1z" fill="#2b2b2b" /><path d="M9 1h20v19H9z" fill="#fdfdfd" opacity=".93" /><path d="M9 8h14v12H9z" fill="#b9b9b9" /></Svg>,
  widgets: <Svg w={30}><rect x="1" y="1" width="29" height="28" rx="2" fill="#0b63a9" /><rect x="4" y="4" width="9.500" height="22" rx="1" fill="#fff" /><rect x="16" y="4" width="10.500" height="11.500" fill="#6bdcfb" /><rect x="16" y="17" width="10.500" height="4" fill="#28a5f5" /><rect x="16" y="22" width="10.500" height="4" fill="#1378d8" /></Svg>,
  chat: <Svg w={30}><path d="M15 1a14 14 0 11-6 27l-8 1 1.500-7A14 14 0 0115 1z" fill="url(#chat)" /><rect x="7" y="10" width="11" height="10" rx="2" fill="#fff" /><path d="M19 13l4.500-3v10L19 17z" fill="#fff" /></Svg>,
  term: <Svg w={30}><rect x="0" y="4" width="30" height="22" rx="1.500" fill="#3a3d40" /><path d="M0 4h20v4H0z" fill="#9fa2a5" /><path d="M20 4h10v4H20z" fill="#6b6e71" /><path d="M4 11l5 5-5 5" stroke="#f0f0f0" strokeWidth="2.300" /><path d="M13 21h10" stroke="#f0f0f0" strokeWidth="2.500" /></Svg>,
  files: <Svg w={30}><path d="M0 4c0-2 1-2.500 2-2.500h8l3 4h16V12H0z" fill="#e3a30c" /><rect x="0" y="6" width="30" height="22" rx="1.500" fill="#fdcb42" /><path d="M5 28v-5c0-2 1-3 3-3h14c2 0 3 1 3 3v5z" fill="#1277c8" /><path d="M9 23.500h12" stroke="#0a4c86" strokeWidth="1.500" /></Svg>,
  edge: <Svg w={30}><circle cx="15" cy="14.500" r="14" fill="url(#edge)" /><path d="M1 14C4 7 13 7 15 12c-5 2-5 12 3 14 4 1 8-1 10-3-3 5-8 6.500-13 5.500C5 27 1 22 1 14z" fill="#12579e" /><path d="M15 12c2 3-3 5 0 8 3 3 9 3 13 .5 0 0-6-.5-7-3.500 0-3-1-6-6-5z" fill="#d3e2ea" /><circle cx="8" cy="22" r="7.500" fill="#a9a9ab" /><circle cx="8" cy="19.500" r="2.800" fill="#56514e" /><path d="M3.500 27c0-5 9-5 9 0-2 2.500-7 2.500-9 0z" fill="#56514e" /></Svg>,
  opera: <Svg w={30}><ellipse cx="15" cy="15" rx="14" ry="13.500" stroke="#f0375e" strokeWidth="2" /><ellipse cx="15" cy="15" rx="7" ry="13" stroke="#f0375e" strokeWidth="2" /><ellipse cx="17" cy="15" rx="5" ry="9.500" stroke="#f0375e" strokeWidth="1" opacity=".7" /></Svg>,
  line: <Svg w={30}><rect width="30" height="30" rx="4" fill="#06b906" /><path d="M15 4.500c6 0 11 4 11 9 0 5-7 9-10.500 12 .3-2 0-3-1-3-6-.5-10.500-4-10.500-9s5-9 11-9z" fill="#fff" /><text x="15" y="16.800" textAnchor="middle" fontSize="8" fontWeight="700" fontFamily="Liberation Sans" fill="#06b906">LINE</text></Svg>,
  discord: <Svg w={30}><circle cx="15" cy="15" r="14.500" fill="#5865f2" /><path d="M9 9.500l3.500-1 1 1.500h3l1-1.500 3.500 1c2.500 4 3.500 7 3 11-2 1.500-3 2-4.500 2l-1-1.800h-7l-1 1.800c-1.500 0-2.500-.5-4.500-2-.5-4 .5-7 3-11z" fill="#fff" /><circle cx="11.500" cy="16" r="2" fill="#5865f2" /><circle cx="18.500" cy="16" r="2" fill="#5865f2" /></Svg>,
  acrobat: <Svg w={30}><rect x="2" y="1.500" width="26" height="27" fill="#2a0a08" stroke="#e01f12" strokeWidth="2.500" /><path d="M14 7c3-2 1 7-6 14-3 3-3-1 3-3 5-1.500 12-1 12 1s-6 0-9-7c-1-2.500-1-4 0-5z" stroke="#f3e9e8" strokeWidth="1.300" /></Svg>,
  cst: <CstLogo w={30} h={30} />,
  paint: <Svg w={30}><path d="M15 1C24 1 29 7 27 14c-1 4-5 2-8 4-2 2 1 6-1 9-3 3-14 1-16-9C0 8 6 1 15 1z" fill="#31a8e8" /><circle cx="7.500" cy="9" r="2.800" fill="#2c9c43" /><circle cx="15" cy="6" r="2.800" fill="#f5b120" /><circle cx="5" cy="16" r="2.600" fill="#dc4b2c" /><circle cx="10" cy="22" r="2.500" fill="#e8f4fb" /><path d="M20 10l5 1-2 8h-3z" fill="#e9b98a" /><path d="M20 19h3v8c0 3-3 3-3 0z" fill="#b5672a" /></Svg>,
  excel: <Svg w={30}><rect x="7" y="1" width="22" height="28" rx="1.500" fill="#21a366" /><path d="M18 1h11v7H18z" fill="#33c481" /><path d="M7 8h11v7H7zM18 15h11v7H18z" fill="#107c41" /><path d="M7 15h11v7H7zM7 22h22v7H7z" fill="#185c37" /><rect x="0" y="7" width="15" height="15" rx="1" fill="#107c41" /><text x="7.500" y="19.500" textAnchor="middle" fontSize="13" fontWeight="700" fontFamily="Open Sans" fill="#fff">X</text></Svg>,
};
const apps = [['win'], ['find'], ['task'], ['widgets'], ['chat'], ['term'], ['files', 1], ['edge'], ['opera', 1], ['line'], ['discord'], ['acrobat', 1], ['cst', 2], ['paint', 1], ['excel', 1]];

export default function App() {
  return (
    <Screen>
      <Global />
      <Defs />
      <TitleBar>
        <QuickAccess>
          {I.newDoc}{I.open}{I.save}{I.saveAll}{I.print}{I.undo}{I.redo}
          <Svg w={14} h={12}><path d="M3 3h8" stroke="#7f98a8" /><path d="M3.500 6.500h7l-3.500 4z" fill="#7f98a8" /></Svg>
        </QuickAccess>
        <AppTitle>triangular proximity feed - CST Studio Suite 2021 - [Student Edition]</AppTitle>
        <WindowButtons>
          <Svg w={16}><path d="M1 8h14" stroke="#fff" strokeWidth="2.500" /></Svg>
          <Svg w={16}><path d="M1.500 4.500h10v10h-10zM4.500 4.500v-3h10v10h-3" stroke="#fff" strokeWidth="1.500" /></Svg>
          <Svg w={16}><path d="M1.500 1.500l13 13M14.500 1.500l-13 13" stroke="#fff" strokeWidth="1.400" /></Svg>
        </WindowButtons>
      </TitleBar>
      <TabBar>
        <RibbonTab $w={66}>File</RibbonTab>
        <RibbonTab $w={69} $on>Home</RibbonTab>
        <RibbonTab $w={92}>Modeling</RibbonTab>
        <RibbonTab $w={97}>Simulation</RibbonTab>
        <RibbonTab $w={134}>Post-Processing</RibbonTab>
        <RibbonTab $w={60}>View</RibbonTab>
        <SearchBox><span>Search (Alt+Q)</span>{I.search}</SearchBox>
        <HelpArea>
          <Svg w={12}><path d="M2 8l4-4.500L10 8" stroke="#dfe8ee" strokeWidth="2.400" /></Svg>
          {I.help}
          <Caret $c="#7492a5" />
        </HelpArea>
      </TabBar>

      <Ribbon>
        <Group $w={185}>
          <GroupBody $pl={1}>
            <BigButton icon="paste" a="Paste" w={67} off />
            <SmallCol $w={118} $ml={-3}>
              <SmallButton icon="del" text="Delete" gap={5} off />
              <SmallButton icon="copy" text="Copy" gap={5} off />
              <SmallButton icon="copyView" text="Copy View" gap={5} arrow />
            </SmallCol>
          </GroupBody>
          <GroupLabel>Clipboard</GroupLabel>
        </Group>
        <Group $w={62}>
          <GroupBody><BigButton icon="units" a="Units" w={62} /></GroupBody>
          <GroupLabel>Settings</GroupLabel>
        </Group>
        <Group $w={362}>
          <GroupBody $pl={2}>
            <BigButton icon="simProject" a="Simulation" b="Project" w={84} arrow={2} />
            <Divider $h={86} $m="6px 0 0 0" />
            <BigButton icon="setup" a="Setup" b="Solver" w={72} arrow={1} />
            <BigButton icon="start" a="Start" b="Simulation" w={88} />
            <SmallCol $w={102} $ml={8}>
              <SmallButton icon="optimizer" text="Optimizer" gap={5} off />
              <SmallButton icon="sweep" text="Par. Sweep" gap={5} />
              <SmallButton icon="clip" text="Logfile" gap={5} arrow />
            </SmallCol>
          </GroupBody>
          <GroupLabel>Simulation</GroupLabel>
        </Group>
        <Group $w={161}>
          <GroupBody $pl={3}>
            <BigButton icon="mesh" a="Mesh" b="View" w={64} />
            <BigButton icon="globalProps" a="Global" b="Properties" w={86} arrow={1} />
          </GroupBody>
          <GroupLabel>Mesh</GroupLabel>
        </Group>
        <Group $w={458}>
          <GroupBody $pl={8}>
            <BigButton icon="editProps" a="Edit" b="Properties" w={88} off />
            <BigButton icon="history" a="History" b="List" w={60} />
            <BigButton icon="calc" a="Calculator" w={76} />
            <BigButton icon="paramUpdate" a="Parametric" b="Update" w={82} off />
            <SmallCol $w={140} $ml={2}>
              <SmallButton icon="params" text="Parameters" arrow />
              <SmallButton icon="problem" text="Problem Type" arrow />
              <SmallButton icon="info" text="Information" />
            </SmallCol>
          </GroupBody>
          <GroupLabel>Edit</GroupLabel>
        </Group>
        <Group $w={81}>
          <GroupBody><BigButton icon="report" a="Open" b="Report" w={81} arrow={1} /></GroupBody>
          <GroupLabel>Report</GroupLabel>
        </Group>
        <Group $w={74}>
          <GroupBody><BigButton icon="macros" a="Macros" b="" w={74} arrow={1} /></GroupBody>
          <GroupLabel>Macros</GroupLabel>
        </Group>
      </Ribbon>

      <Work>
        <NavPanel>
          <PanelTitle $h={21} $pl={3}><span>Navigation Tree</span><CloseX /></PanelTitle>
          <NavSearch>Search</NavSearch>
          <TreeBox>
            <TreeList>
              {tree.map((t, i) => <TreeItem key={i} item={t} first={i === 0} last={i === 6} onlyChild={i === 1} />)}
            </TreeList>
            <TreeScroll><TreeThumb /></TreeScroll>
          </TreeBox>
        </NavPanel>

        <RightSide>
          <DocTab>
            <Svg w={20}><path d="M0 0h20v20H0z" fill="#0d9488" /><path d="M4 9c3-4 5 1 8-1s4-2 6-2M4 14c3-4 5 1 8-1s4-2 6-2" stroke="#fff" strokeWidth="1.600" /></Svg>
            <span>triangular proximity feed*</span>
            <TabClose><CloseX s={12} c="#fff" w={2.600} /></TabClose>
          </DocTab>
          <Viewport><Scene /></Viewport>
          <ViewTabs>
            <ActiveTab $w={125} $h={22}>3D</ActiveTab>
            <Plain $w={125}>Schematic</Plain>
            <Divider $h={12} $m="4px 0 0 0" $c="#999" />
            <Plain $w={156} $pl={9} $ls="-0.1px">1D Results\S-Parameters</Plain>
            <TabClose $grey $h={17}><CloseX s={10} c="#fff" w={2.600} /></TabClose>
            <Divider $h={12} $m="4px 0 0 17px" $c="#999" />
          </ViewTabs>

          <Docks>
            <Dock>
              <PanelTitle $ls={-0.35}><span>Parameter List</span><CloseX /></PanelTitle>
              <TableFrame>
                <Table>
                  <HeadRow>
                    <HeadCell>
                      <Svg w={18} h={24}><path d="M1 5h16l-6 8v8l-4-2v-6z" fill="#ccc" stroke="#888" /></Svg>
                    </HeadCell>
                    <HeadCell>
                      Name
                      <Svg w={160} h={10}><path d="M79 6l4.500-5 4.500 5" stroke="#777" strokeWidth="1.300" /></Svg>
                    </HeadCell>
                    <HeadCell>Expression</HeadCell>
                    <HeadCell>Value</HeadCell>
                    <HeadCell>Description</HeadCell>
                  </HeadRow>
                  {params.map(([n, e, v, d], i) => (
                    <Row key={n} $sel={i === 0}>
                      <Gutter><Svg w={15} h={10}><path d="M0 5h6M6 1v8M8 3h4v4H8zM13 1v8" stroke="#858585" strokeWidth="1.400" /></Svg></Gutter>
                      <Cell><span>{n}</span>{i > 0 && <Eq>=</Eq>}</Cell>
                      <Cell>{e}</Cell>
                      <Cell $dim>{v}</Cell>
                      <Cell>{d}</Cell>
                    </Row>
                  ))}
                </Table>
                <ScrollBar>
                  <ScrollBtn><Caret $c="#777" /></ScrollBtn>
                  <ScrollThumb $h={170} />
                  <ScrollBtn $end><Caret $c="#777" /></ScrollBtn>
                </ScrollBar>
              </TableFrame>
              <DockTabs>
                <ActiveTab $w={110} $h={25}>Parameter List</ActiveTab>
                <Plain $w={120} $strong>Result Navigator</Plain>
                <Divider $h={14} $m="6px 0 0 0" $c="#999" />
              </DockTabs>
            </Dock>

            <Dock>
              <PanelTitle $ls={-0.35}><span>Messages</span><CloseX /></PanelTitle>
              <MsgTools>
                <MsgTool $bg="#fff"><Svg w={18}><circle cx="9" cy="9" r="8.500" fill="#8d8d8d" /><path d="M5.500 5.500l7 7M12.500 5.500l-7 7" stroke="#fff" strokeWidth="2.600" /></Svg></MsgTool>
                <MsgTool $bg="#e0e0e0"><WarnIcon /></MsgTool>
                <MsgTool $bg="#e0e0e0"><InfoBubble /></MsgTool>
                <MsgTool $ml={8}><Svg w={19} h={16}><path d="M10 4h8M10 9h8M4 14h14" stroke="#333" strokeWidth="2.400" /><path d="M1 2l8 8M9 2l-8 8" stroke="#c0453a" strokeWidth="2" /></Svg></MsgTool>
              </MsgTools>
              <MsgFrame>
                <MsgList>
                  <Msg $h={87}>
                    <span />
                    <MsgBody $pt={0}>
                      <div>Maximum number of time steps: 8230</div>
                      <div>Time step width:</div>
                      <Indent>without subcycles: 1.151735335e-003 ns</Indent>
                      <Indent>used: 1.151735335e-003 ns</Indent>
                      <div>Number of threads used: 4</div>
                    </MsgBody>
                  </Msg>
                  <Msg $h={26}><InfoBubble /><MsgBody $pt={4}>Steady state energy criterion met, solver finished successfully.</MsgBody></Msg>
                  <Msg $h={42}><InfoBubble /><MsgBody $pt={4}>{'The Z and Y matrices have been successfully calculated.\nThe VSWR results have been successfully calculated.'}</MsgBody></Msg>
                  <Msg $h={27}><WarnIcon /><MsgBody $pt={5}>15 warnings occurred.</MsgBody></Msg>
                  <Msg $h={27}><InfoBubble /><MsgBody $pt={4} $last>Creating parametric 1D results for Run ID 1</MsgBody></Msg>
                </MsgList>
                <ScrollBar>
                  <ScrollBtn><Caret $c="#888" /></ScrollBtn>
                  <ScrollThumb $mt={130} $h={37} />
                  <ScrollBtn $end><Caret $c="#888" /></ScrollBtn>
                </ScrollBar>
              </MsgFrame>
              <DockTabs>
                <ActiveTab $w={83} $h={25}>Messages</ActiveTab>
                <Plain $w={77} $strong>Progress</Plain>
                <Divider $h={14} $m="6px 0 0 0" $c="#999" />
              </DockTabs>
            </Dock>
          </Docks>
        </RightSide>
      </Work>

      <StatusBar>
        <Ready>Ready</Ready>
        <StatusIcon $w={27}>{S.zoomBox}</StatusIcon>
        <StatusIcon $w={27} $on>{S.pan}</StatusIcon>
        <StatusIcon $w={28}>{S.orbit}</StatusIcon>
        <StatusIcon $w={28}>{S.zoomDyn}</StatusIcon>
        <StatusIcon $w={28}>{S.rotate}</StatusIcon>
        <Divider $h={18} $m="0 3px" />
        <StatusIcon $w={27}>{S.fit}</StatusIcon>
        <StatusIcon $w={28}>{S.work}</StatusIcon>
        <StatusIcon $w={47}>{S.view}<Caret $ml={2} /></StatusIcon>
        <Divider $h={18} $m="0 1px 0 0" />
        <StatusIcon $w={31}>{S.plot}</StatusIcon>
        <StatusText $w={104} $pl={8}>Raster=1.000</StatusText>
        <Divider $h={22} $c="#777" />
        <StatusText $w={137} $pl={9}>Meshcells=89,216</StatusText>
        <Divider $h={22} $c="#777" />
        <StatusText $w={68} $pl={9}>Normal</StatusText>
        <Divider $h={22} $c="#777" />
        <StatusText $w={43}>mm</StatusText>
        <StatusText $w={36} $pl={1}>GHz</StatusText>
        <StatusText $w={23} $pl={1}>ns</StatusText>
        <StatusText $w={19} $pl={1}>K</StatusText>
        <Divider $h={22} $c="#777" />
      </StatusBar>

      <TaskBar>
        <Apps>
          {apps.map(([k, s]) => (
            <App1 key={k} $on={s === 2}>{T[k]}{s && <Dot $on={s === 2} />}</App1>
          ))}
        </Apps>
        <Tray>
          <Svg w={24} h={20}><path d="M2 14l8-8 8 8" stroke="#1b1b1b" strokeWidth="1.600" /></Svg>
          <Svg w={22}><path d="M1.500 9C7 3 15 3 20.500 9M4.500 12.500c4-4.500 9-4.500 13 0M7.500 15.500c2-2.500 5-2.500 7 0" stroke="#1b1b1b" strokeWidth="1.700" /><circle cx="11" cy="18" r="1.800" fill="#1b1b1b" /></Svg>
          <Svg w={22}><path d="M1.500 8.500h3.500l5-4.500v14l-5-4.500H1.500zM13 8.500c1.500 1.500 1.500 3.500 0 5M15.500 6c3 3 3 7 0 10M18 3.500c4.500 4.500 4.500 10.500 0 15" stroke="#1b1b1b" strokeWidth="1.400" /></Svg>
          <Svg w={20} vb="2 0 20 20"><path d="M4.500 5.500h13v10h-13z" stroke="#1b1b1b" strokeWidth="1.500" /><path d="M6.500 7.500h9.500v6.500H6.500z" fill="#1b1b1b" /><path d="M18 8.500h2v4h-2z" fill="#1b1b1b" /><path d="M2 3h7v4l-2 2.500H4L2 7z" fill="#1b1b1b" /><path d="M3.500 0v4M7.500 0v4M5 9v6" stroke="#1b1b1b" strokeWidth="1.500" /></Svg>
          <Clock>11:30<br />22/06/2022</Clock>
          <Badge>1</Badge>
        </Tray>
      </TaskBar>
    </Screen>
  );
}
